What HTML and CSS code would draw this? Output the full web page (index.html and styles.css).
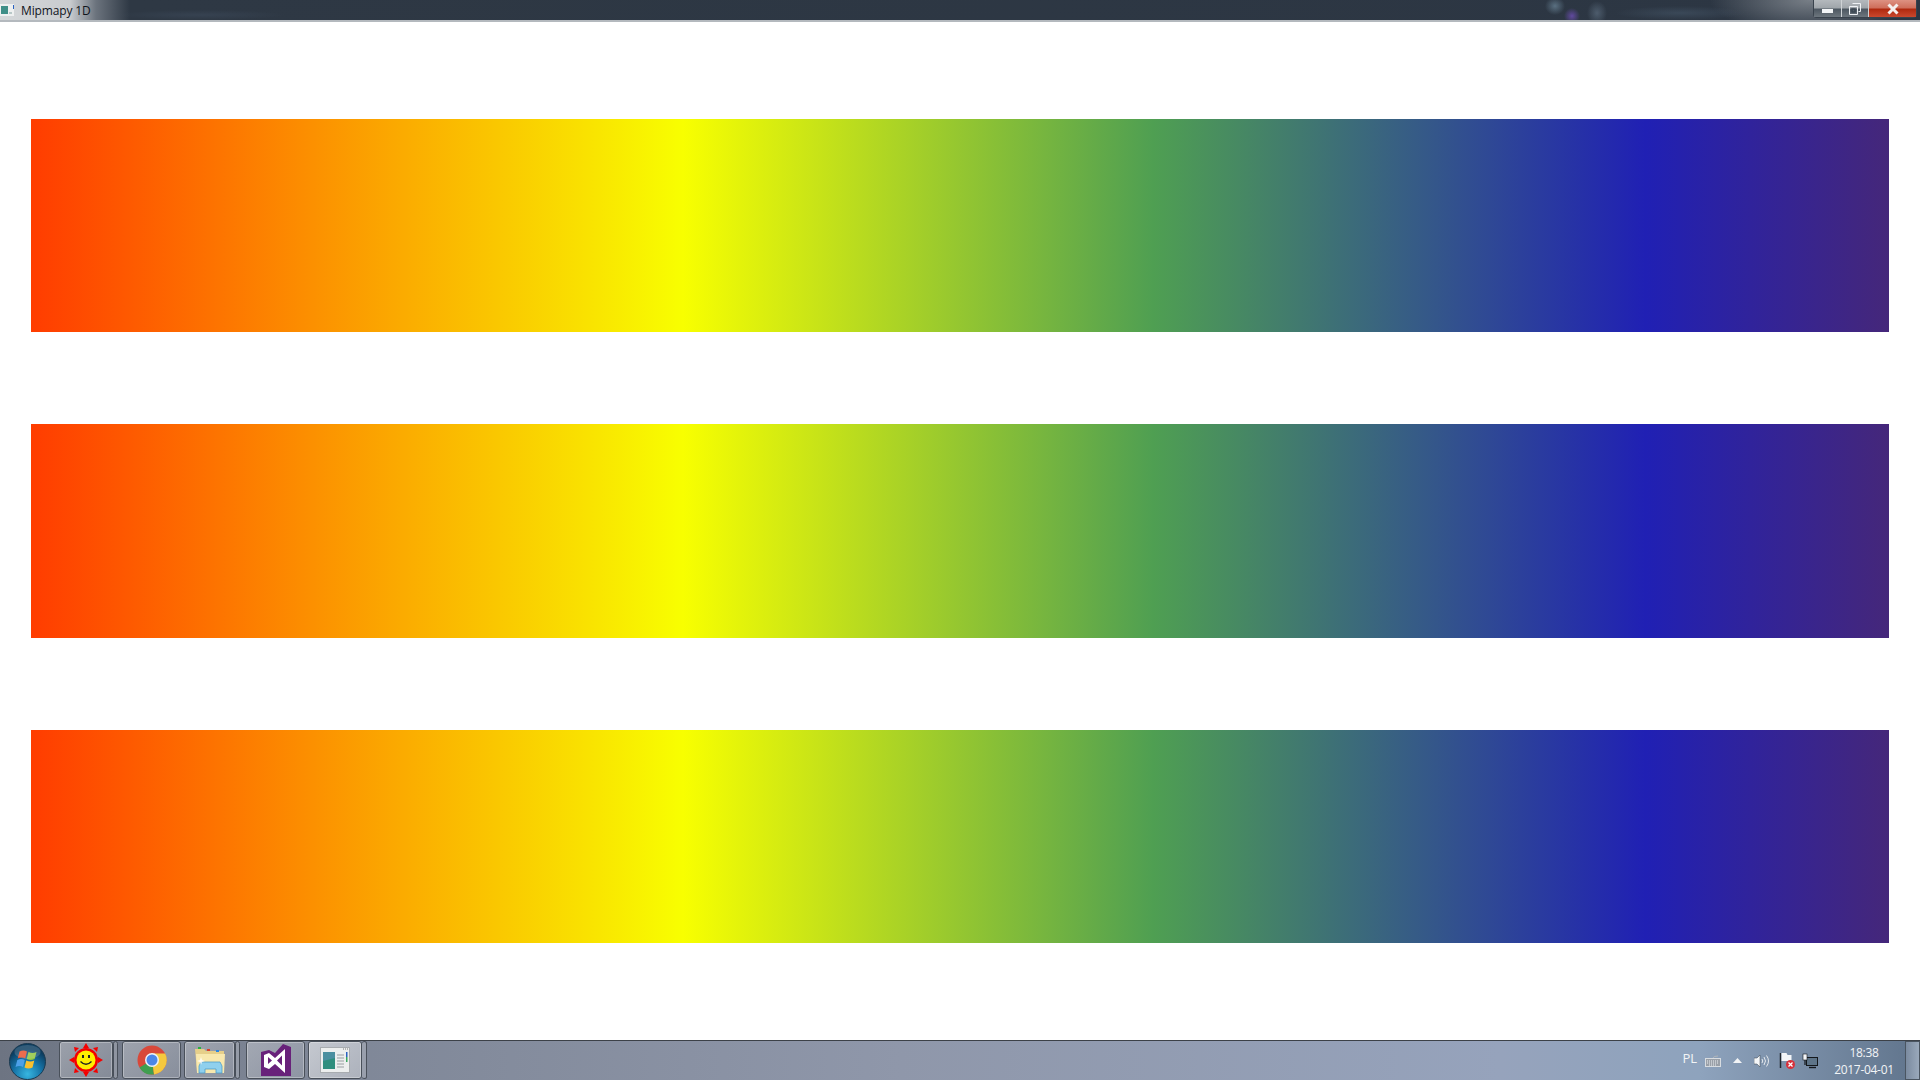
FILE: index.html
```html
<!DOCTYPE html>
<html lang="en">
<head>
  <meta charset="UTF-8" />
  <title>Mipmapy 1D</title>
  <link rel="stylesheet" href="styles.css">
</head>
<body>

  <header class="titlebar">
    <svg class="app-icon" width="16" height="16" viewBox="0 0 16 16">
      <rect x="0" y="2" width="14" height="12" fill="#eef0f0"/>
      <rect x="1" y="4" width="7" height="8" fill="#3f8f88"/>
      <rect x="9" y="10" width="3" height="2" fill="#b8c8c8"/>
      <rect x="13" y="3" width="1" height="4" fill="#2a62c0"/>
    </svg>
    <span class="title">Mipmapy 1D</span>
    <div class="blur-strip"></div>
    <div class="win-controls">
      <div class="win-btn win-min"><span class="min-glyph"></span></div>
      <div class="win-btn win-max">
        <svg width="12" height="12" viewBox="0 0 12 12">
          <path d="M3.5 .5h8v8h-2M.5 3.5h8v8h-8z" fill="none" stroke="#eef1f4" stroke-width="1"/>
          <rect x="3" y="6" width="3" height="3" fill="none" stroke="#3a4652" stroke-width="1.4"/>
        </svg>
      </div>
      <div class="win-btn win-close">
        <svg width="14" height="12" viewBox="0 0 14 12">
          <path d="M2.5 1.5l9 9M11.5 1.5l-9 9" stroke="#f4f0ee" stroke-width="3"/>
        </svg>
      </div>
    </div>
  </header>

  <main class="content">
    <div class="bar"></div>
    <div class="bar"></div>
    <div class="bar"></div>
  </main>

  <footer class="taskbar">
    <div class="orb">
      <svg width="37" height="37" viewBox="0 0 37 37">
        <defs>
          <radialGradient id="orbFill" cx="50%" cy="85%" r="70%">
            <stop offset="0" stop-color="#37b6e0"/>
            <stop offset=".55" stop-color="#1674a8"/>
            <stop offset="1" stop-color="#0c3d60"/>
          </radialGradient>
        </defs>
        <circle cx="18.5" cy="18.5" r="18" fill="url(#orbFill)" stroke="#1c3a50"/>
        <path d="M10.5 8.5q4-2 7.5 0l-1.8 7q-3.500-2-7.500 0z" fill="#e8502c"/>
        <path d="M19.500 9q4 2 8 0l-1.800 7q-4 2-8 0z" fill="#8ec63f"/>
        <path d="M8.300 17q4-2 7.500 0l-1.800 7q-3.500-2-7.500 0z" fill="#4da0e8"/>
        <path d="M17.300 17.500q4 2 8 0l-1.800 7q-4 2-8 0z" fill="#fbc02d"/>
        <ellipse cx="18.500" cy="9" rx="13" ry="7" fill="#fff" opacity=".16"/>
      </svg>
    </div>

    <div class="task-btn task-sun">
      <svg width="34" height="34" viewBox="0 0 34 34">
        <g fill="#f40000">
          <circle cx="17" cy="17" r="12"/>
          <path d="M14 5l3-5 3 5zM14 29l3 5 3-5zM5 14l-5 3 5 3zM29 14l5 3-5 3z"/>
          <path d="M6 9l-1-5 5 1zM28 9l1-5-5 1zM6 25l-1 5 5-1zM28 25l1 5-5-1z"/>
        </g>
        <circle cx="17" cy="17" r="9.500" fill="#ffee00"/>
        <rect x="13" y="12" width="2" height="3" fill="#222"/>
        <rect x="19" y="12" width="2" height="3" fill="#222"/>
        <path d="M11.500 18.500q5.500 5.500 11 0" fill="none" stroke="#222" stroke-width="1.400"/>
      </svg>
    </div>
    <div class="task-sep"></div>

    <div class="task-btn task-chrome">
      <svg width="30" height="30" viewBox="0 0 30 30">
        <circle cx="15" cy="15" r="14.500" fill="#d8483a"/>
        <path d="M15 15L2.500 22.500A14.500 14.500 0 0 0 17 29.400z" fill="#3f9e50"/>
        <path d="M15 8.500h13.200A14.500 14.500 0 0 1 17 29.400L15 15z" fill="#f5c93e"/>
        <circle cx="15" cy="15" r="7" fill="#eef2f8"/>
        <circle cx="15" cy="15" r="5.500" fill="#4c86e8"/>
      </svg>
    </div>

    <div class="task-btn task-folder">
      <svg width="32" height="28" viewBox="0 0 32 28">
        <path d="M1 3h9l2 2h18v20H3z" fill="#e6cf8a"/>
        <rect x="4" y="1" width="3" height="2" fill="#28b040"/>
        <rect x="13" y="3" width="3" height="2" fill="#d84030"/>
        <rect x="22" y="4" width="3" height="2" fill="#2e88e0"/>
        <path d="M2 8h29l-1 19H3z" fill="#f8e8ae"/>
        <path d="M7 16h19l2 4v7h-6v-4H11v4H5v-7z" fill="#8fd0ee" stroke="#4c9cc8" stroke-width=".8"/>
        <path d="M7 11l1 3 3 1-3 1-1 3-1-3-3-1 3-1z" fill="#fff" opacity=".85"/>
      </svg>
    </div>
    <div class="task-sep task-sep-folder"></div>

    <div class="task-btn task-vs">
      <svg width="30" height="32" viewBox="0 0 30 32">
        <path d="M0 8l8-2 6 3 8-9 8 3v29H0z" fill="#68217a"/>
        <path d="M3 11l5-2 6 5 10-9v24l-10-9-6 5-5-2zM7 13v7l4-3.500zM21 11.500l-5 5 5 5z" fill="#fff" fill-rule="evenodd"/>
      </svg>
    </div>

    <div class="task-btn task-active">
      <svg width="30" height="26" viewBox="0 0 30 26">
        <rect x=".5" y=".5" width="29" height="25" fill="#eceeee" stroke="#a8acb0"/>
        <rect x="3" y="5" width="12" height="17" fill="#2f8e7e"/>
        <path d="M3 5h12v6L3 14z" fill="#4b8fa0"/>
        <path d="M17 8h7M17 11h7M17 14h7M17 17h7M17 20h7" stroke="#9a9ea2"/>
        <rect x="26" y="5" width="1.500" height="5" fill="#2a62c0"/>
        <rect x="26" y="10" width="1.500" height="5" fill="#38a860"/>
        <path d="M23 2h1M25 2h1M27 2h1" stroke="#777"/>
      </svg>
    </div>
    <div class="task-sep task-sep-last"></div>

    <div class="tray">
      <span class="lang">PL</span>
      <svg class="tray-kbd" width="16" height="12" viewBox="0 0 16 12">
        <rect x=".5" y="3.500" width="15" height="8" fill="#9aa0a8" stroke="#d8dce0"/>
        <path d="M2 6h12M2 8h12M4 10h8" stroke="#eceff2" stroke-dasharray="1 1"/>
        <path d="M8 3q0-2 5-2" fill="none" stroke="#b0b5ba"/>
      </svg>
      <svg class="tray-arrow" width="9" height="5" viewBox="0 0 9 5"><path d="M4.500 0l4.500 5H0z" fill="#f2f4f6"/></svg>
      <svg class="tray-speaker" width="16" height="14" viewBox="0 0 16 14">
        <path d="M0 4h3l3-3v12l-3-3H0z" fill="#f4f6f8" stroke="#39424c" stroke-width=".5"/>
        <path d="M8 5q1.500 2 0 4M10 3q3 4 0 8M12.500 1.500q4 5.500 0 11" fill="none" stroke="#e4e8ec"/>
      </svg>
      <svg class="tray-flag" width="16" height="17" viewBox="0 0 16 17">
        <path d="M1.500 1v15" stroke="#20262c" stroke-width="1.500"/>
        <path d="M2.500 1h5l1 2h4v6h-10z" fill="#f4f6f8"/>
        <circle cx="11.500" cy="12.500" r="4.500" fill="#d8303a"/>
        <path d="M9.500 10.500l4 4M13.500 10.500l-4 4" stroke="#fff" stroke-width="1.300"/>
      </svg>
      <svg class="tray-net" width="16" height="16" viewBox="0 0 16 16">
        <rect x="4.500" y="4.500" width="11" height="8" fill="#5e7488" stroke="#14181c"/>
        <path d="M7 14.500h7" stroke="#14181c" stroke-width="1.400"/>
        <rect x="1" y="1" width="4" height="6" fill="#f4f6f8" stroke="#14181c" stroke-width=".6"/>
        <path d="M3 7v5" stroke="#14181c" stroke-width="1.200"/>
      </svg>
      <div class="clock">
        <span>18:38</span>
        <span>2017-04-01</span>
      </div>
      <div class="show-desktop"></div>
    </div>
  </footer>

</body>
</html>
```

FILE: styles.css
```css
* {
  box-sizing: border-box;
}
html, body {
  margin: 0;
  height: 100%;
}
body {
  width: 1920px;
  height: 1080px;
  display: flex;
  flex-direction: column;
  overflow: hidden;
  background: #fff;
  font-family: "Open Sans", "Noto Sans", sans-serif;
}

/* window title, the blurred spots are what shows through the glass */
.titlebar {
  height: 22px;
  display: flex;
  align-items: flex-start;
  border-bottom: 2px solid #b4b9be;
  background:
    radial-gradient(ellipse 8px 8px at 1572px 16px, rgba(115, 80, 190, .75), transparent),
    radial-gradient(ellipse 10px 9px at 1555px 6px, rgba(120, 150, 170, .6), transparent),
    radial-gradient(ellipse 10px 12px at 1597px 13px, rgba(110, 130, 150, .5), transparent),
    radial-gradient(ellipse 65px 7px at 1680px 13px, rgba(80, 100, 120, .4), transparent),
    radial-gradient(ellipse 85px 5px at 200px 15px, rgba(70, 85, 105, .35), transparent),
    radial-gradient(ellipse 100px 34px at 1810px 0, rgba(170, 175, 180, .6), transparent),
    linear-gradient(90deg, #d5d8da 0, #c9cccf 70px, #6b737d 96px, #2e3844 130px, #2c3643 100%);
}
.app-icon {
  margin: 2px 0 0 0;
  flex: none;
}
.title {
  margin-left: 5px;
  font-size: 12px;
  line-height: 21px;
  letter-spacing: -.15px;
  color: #10141c;
}
.blur-strip {
  flex: 1;
}
.win-controls {
  display: flex;
  height: 18px;
  margin-right: 3px;
  border: 1px solid #39424c;
  border-top: 0;
  border-radius: 0 0 4px 4px;
}
.win-btn {
  display: flex;
  align-items: center;
  justify-content: center;
  height: 100%;
  border-right: 1px solid #cfd3d6;
  background: linear-gradient(#b4b9bd, #a0a6ab 45%, #4e5862 55%, #6d767e);
}
.win-min {
  width: 28px;
}
.min-glyph {
  width: 11px;
  height: 4px;
  margin-top: 4px;
  background: #f2f4f6;
}
.win-max {
  width: 27px;
}
.win-close {
  width: 47px;
  border-right: 0;
  background: linear-gradient(#dd9282, #cf6f5c 45%, #b02a10 55%, #c9482e);
}

/* gradient bars */
.content {
  flex: 1;
  display: flex;
  flex-direction: column;
  gap: 92px;
  padding: 97px 31px;
}
.bar {
  flex: 1;
  background: linear-gradient(90deg,
    #ff3c00 0%,
    #f8ff00 35.1%,
    #4f9f52 60.4%,
    #2020b4 86.9%,
    #45277a 100%);
}

/* taskbar */
.taskbar {
  height: 40px;
  display: flex;
  align-items: stretch;
  border-top: 1px solid #3c4148;
  background: linear-gradient(90deg, #6d7482 0, #7e8696 300px, #8f97aa 900px, #96a3bc 1500px, #8ea3bd 1700px, #63778f 1905px);
}
.orb {
  width: 56px;
  padding: 2px 0 0 9px;
}
.task-btn {
  display: flex;
  align-items: center;
  justify-content: center;
  margin: 0 2px 1px 4px;
  border: 1px solid #49505a;
  border-radius: 3px;
  background: linear-gradient(135deg, rgba(255, 255, 255, .3), rgba(255, 255, 255, .12));
  box-shadow: inset 0 0 0 1px rgba(255, 255, 255, .3);
}
.task-sun {
  width: 54px;
  margin-left: 3px;
  margin-right: 0;
}
.task-chrome {
  width: 59px;
  margin-left: 4px;
}
.task-folder {
  width: 51px;
  margin-left: 1px;
  margin-right: 0;
}
.task-vs {
  width: 59px;
  margin-left: 6px;
}
.task-active {
  width: 54px;
  margin-left: 1px;
  margin-right: 0;
  background: linear-gradient(135deg, rgba(255, 255, 255, .55), rgba(255, 255, 255, .35));
}
.task-sep {
  width: 5px;
  margin: 0 0 1px 0;
  border: 1px solid #49505a;
  border-radius: 3px;
  background: rgba(255, 255, 255, .2);
}
.task-sep-last {
  border-left: 0;
}

.tray {
  flex: 1;
  display: flex;
  align-items: center;
  justify-content: flex-end;
  color: #f2f4f6;
}
.lang {
  margin-right: 8px;
  margin-top: -6px;
  font-size: 13px;
  line-height: 16px;
}
.tray-kbd {
  margin-right: 12px;
}
.tray-arrow {
  margin-right: 12px;
}
.tray-speaker {
  margin-right: 9px;
}
.tray-flag {
  margin-right: 7px;
}
.tray-net {
  margin-right: 11px;
}
.clock {
  display: flex;
  flex-direction: column;
  align-items: center;
  width: 70px;
  margin-right: 6px;
  font-size: 12px;
  line-height: 17px;
  letter-spacing: -.3px;
}
.show-desktop {
  width: 15px;
  height: 100%;
  border: 1px solid #4a5561;
  background: linear-gradient(90deg, #7b8ba0, #9aa9bb);
}
```
